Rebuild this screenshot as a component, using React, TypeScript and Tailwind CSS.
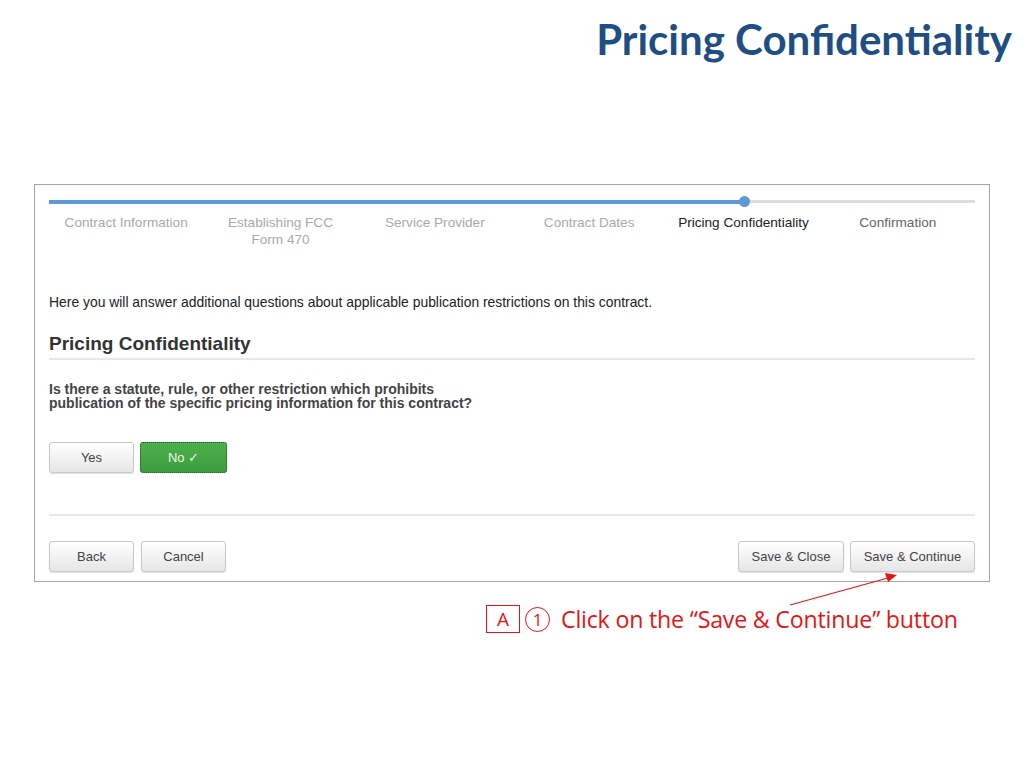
const steps = [
  ["Contract Information"],
  ["Establishing FCC", "Form 470"],
  ["Service Provider"],
  ["Contract Dates"],
  ["Pricing Confidentiality"],
  ["Confirmation"],
];

const btn =
  "h-[31px] rounded-[3px] border border-[#c8c8c8] bg-gradient-to-b from-white to-[#e6e6e6] text-[13px] text-[#444] shadow-[0_1px_1px_rgba(0,0,0,0.12)]";

function StepBar() {
  return (
    <div>
      <div className="relative h-[3px] bg-[#dcdcdc]">
        <div className="absolute left-0 top-[-0.5px] h-[4px] w-[695px] bg-[#5b9bd5]" />
        <div className="absolute left-[690px] top-[-4px] h-[11px] w-[11px] rounded-full bg-[#5b9bd5]" />
      </div>
      <div className="mt-[11px] grid grid-cols-6 text-center text-[13.6px] leading-[17px]">
        {steps.map((s, i) => (
          <div
            key={i}
            className={
              i === 4 ? "text-[#222]" : i === 5 ? "text-[#666]" : "text-[#aaa]"
            }
          >
            {s.map((l) => (
              <div key={l}>{l}</div>
            ))}
          </div>
        ))}
      </div>
    </div>
  );
}

export default function App() {
  return (
    <div
      className="relative h-[768px] w-[1024px] bg-white"
      style={{ fontFamily: '"Liberation Sans", Arial, sans-serif' }}
    >
      <div className="flex justify-end pr-[12px] pt-[13px]">
        <h1
          className="text-[42px] font-bold leading-[52px] text-[#1f4e85]"
          style={{ fontFamily: 'Lato, "Open Sans", sans-serif' }}
        >
          Pricing Confidentiality
        </h1>
      </div>

      <div className="ml-[34px] mt-[119px] h-[398px] w-[956px] border border-[#a6a6a6] px-[14px] pt-[15px]">
        <StepBar />

        <p className="mt-[44px] text-[13.9px] text-[#222]">
          Here you will answer additional questions about applicable
          publication restrictions on this contract.
        </p>

        <h2 className="mt-[20px] border-b-2 border-[#e8e8e8] pb-[3px] text-[19px] font-bold leading-[22px] text-[#333]">
          Pricing Confidentiality
        </h2>

        <p className="mt-[22px] text-[14px] font-bold leading-[14px] text-[#444]">
          Is there a statute, rule, or other restriction which prohibits
          <br />
          publication of the specific pricing information for this contract?
        </p>

        <div className="mt-[32px] flex gap-[6px]">
          <button className={`${btn} w-[85px]`}>Yes</button>
          <button className="h-[31px] w-[87px] rounded-[3px] border border-dotted border-[#1e5e1e] bg-gradient-to-b from-[#4cb14c] to-[#3c9c3c] text-[13px] text-[#e8f5e8]">
            No ✓
          </button>
        </div>

        <div className="mt-[41px] h-[2px] bg-[#e8e8e8]" />

        <div className="mt-[25px] flex items-center">
          <div className="flex gap-[7px]">
            <button className={`${btn} w-[85px]`}>Back</button>
            <button className={`${btn} w-[85px]`}>Cancel</button>
          </div>
          <div className="ml-auto flex gap-[6px]">
            <button className={`${btn} w-[106px]`}>Save &amp; Close</button>
            <button className={`${btn} w-[125px]`}>Save &amp; Continue</button>
          </div>
        </div>
      </div>

      <div
        className="ml-[486px] mt-[22px] flex items-center text-[23.2px] leading-[30px] text-[#e81414]"
        style={{ fontFamily: '"Open Sans", "DejaVu Sans", sans-serif' }}
      >
        <span className="flex h-[28px] w-[34px] items-center justify-center border border-[#e81414] text-[19px]">
          A
        </span>
        <span className="ml-[5px] flex h-[25px] w-[25px] items-center justify-center rounded-full border-[1.5px] border-[#e81414] text-[17px] leading-none">
          1
        </span>
        <span className="ml-[11px] tracking-[-0.2px]">
          Click on the “Save &amp; Continue” button
        </span>
      </div>

      <svg
        className="absolute left-0 top-0"
        width="1024"
        height="768"
        viewBox="0 0 1024 768"
      >
        <line x1="790" y1="605" x2="888" y2="578" stroke="#e81414" strokeWidth="1.2" />
        <polygon points="897,575 885,573 888,582" fill="#e81414" />
      </svg>
    </div>
  );
}
